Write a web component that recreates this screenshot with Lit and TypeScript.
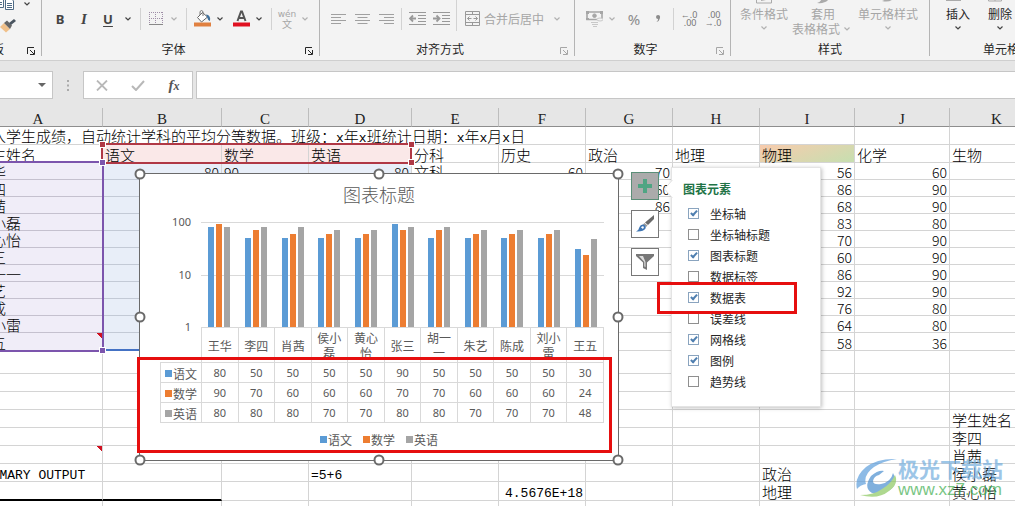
import { LitElement, html, css, nothing } from "lit";
import { customElement, property } from "lit/decorators.js";
import { classMap } from "lit/directives/class-map.js";

const NAMES = ["王华", "李四", "肖茜", "侯小磊", "黄心怡", "张三", "胡一一", "朱艺", "陈成", "刘小雷", "王五"];

const SERIES = [
  { name: "语文", key: "s1", values: [80, 50, 50, 50, 50, 90, 50, 50, 50, 50, 30] },
  { name: "数学", key: "s2", values: [90, 70, 60, 60, 60, 70, 70, 60, 60, 60, 24] },
  { name: "英语", key: "s3", values: [80, 80, 80, 70, 70, 80, 80, 70, 70, 70, 48] },
];

const OPTIONS: [string, boolean][] = [
  ["坐标轴", true],
  ["坐标轴标题", false],
  ["图表标题", true],
  ["数据标签", false],
  ["数据表", true],
  ["误差线", false],
  ["网格线", true],
  ["图例", true],
  ["趋势线", false],
];

const COLUMNS = ["A", "B", "C", "D", "E", "F", "G", "H", "I", "J", "K"];
const PHYSICS = [56, 86, 68, 83, 70, 60, 86, 92, 76, 64, 58];
const CHEMISTRY = [60, 90, 90, 80, 90, 90, 90, 90, 80, 80, 36];

type Cell = string | number;
type Row = { cls: string; cells: Record<string, Cell> };

const ROWS: Row[] = [
  { cls: "r18", cells: { B: "语文", C: "数学", D: "英语", A: "学生姓名", E: "分科", F: "历史", G: "政治", H: "地理", I: "物理", J: "化学", K: "生物" } },
  ...NAMES.map((name, i) => {
    const cells: Record<string, Cell> = { A: name, I: PHYSICS[i], J: CHEMISTRY[i] };
    if (i === 0) Object.assign(cells, { B: 80, C: "90", D: 80, E: "文科", F: 60, G: 70 });
    if (i === 1) cells.G = 60;
    if (i === 2) cells.G = 86;
    return { cls: i === 10 ? "r18 data last" : "r17 data", cells };
  }),
  { cls: "r23", cells: {} },
  { cls: "r18", cells: {} },
  { cls: "r18", cells: {} },
  { cls: "r18", cells: { K: "学生姓名" } },
  { cls: "r18", cells: { K: "李四" } },
  { cls: "r18 noted", cells: { K: "肖茜" } },
  { cls: "r18", cells: { A: "SUMMARY OUTPUT", D: "=5+6", I: "政治", K: "侯小磊" } },
  { cls: "r19 ruled", cells: { F: 4.5676e18, I: "地理", K: "黄心怡" } },
  { cls: "r18", cells: {} },
];

const caret = html`<svg class="caret" width="14" height="8" viewBox="0 0 14 8"><path d="M4.5 2.5 7 5l2.5-2.5" fill="none" stroke="currentColor" stroke-width="1.2"/></svg>`;
const launcher = html`<svg width="8" height="8" viewBox="0 0 8 8" fill="none" stroke="currentColor"><path d="M.5 7V.5H7M3 3l4 4M7.5 3v4.5H3"/></svg>`;

@customElement("ribbon-bar")
class RibbonBar extends LitElement {
  static styles = css`
    :host { display: flex; height: 60px; flex: none; overflow: hidden; background: #f3f3f3; border-bottom: 1px solid #cfcfcf; font: 12px/15px "Noto Sans CJK SC", sans-serif; color: #262626; }
    .group { display: flex; flex-direction: column; box-sizing: border-box; height: 56px; border-right: 1px solid #b4b4b4; flex: none; }
    .clip { width: 97px; margin-left: -55px; }
    .font { width: 278px; }
    .align { width: 255px; }
    .number { width: 156px; }
    .styles { width: 199px; }
    .cells { flex: 1 0 142px; border: 0; }
    .body { display: flex; height: 41px; align-items: flex-start; }
    .foot { display: flex; height: 15px; align-items: center; }
    .name { flex: 1; text-align: center; }
    .launch { width: 14px; height: 15px; padding: 5px 0 0; display: block; }
    button { font: inherit; color: inherit; border: 0; background: none; padding: 0; margin: 0; display: flex; align-items: center; justify-content: center; }
    svg { display: block; flex: none; }
    .caret { opacity: 0.85; }
    .tool { width: 24px; height: 37px; }
    .icon { width: 20px; height: 37px; }
    .drop { width: 14px; height: 37px; margin-left: 1px; }
    .sep { width: 1px; height: 22px; margin: 8px 5px 0; background: #d2d2d2; }
    .align .sep, .number .sep { margin: 8px 3px 0; }
    .align .tall { height: 31px; margin-top: 0; }
    .dim { color: #a6a6a6; }
    .font .body { padding-left: 6px; }
    .align .body { padding-left: 6px; }
    .number .body { padding-left: 9px; }
    .styles .body { padding-left: 9px; gap: 4px; }
    .cells .body { padding-left: 16px; gap: 18px; }
    .letter { font: bold 13px/18px "Noto Sans", sans-serif; color: #444; }
    .italic { font: italic bold 15px/18px "Liberation Serif", serif; color: #444; }
    .under { text-decoration: underline; text-underline-offset: 2px; }
    .second { margin-left: 4px; }
    .merge { height: 37px; padding: 0 5px; gap: 4px; }
    .merge .caret { margin-left: 2px; }
    .percent { font: 15px/18px "Noto Sans", sans-serif; margin-left: 3px; color: #8c8c8c; }
    .big { flex-direction: column; justify-content: flex-start; }
    .big .pic { height: 6px; }
    .big .caret { margin: 3px 0; }
    .line { display: flex; align-items: center; }
    .line .caret { margin: 0; }
    .phon { flex-direction: column; font-size: 10px; line-height: 9px; }
    .pin { font: 9px/9px "DejaVu Sans", sans-serif; }
    .deci { font: 9px/8px "Noto Sans", sans-serif; color: #777; }
    .brush { display: flex; flex-direction: column; padding-left: 55px; gap: 8px; }
    .copy { display: flex; height: 11px; gap: 4px; align-items: flex-start; }
  `;

  lines(d: string) {
    return html`<svg width="16" height="12" viewBox="0 0 16 12"><path d=${d} stroke="#a0a0a0" fill="none"/></svg>`;
  }

  render() {
    return html`
      <section class="group clip">
        <div class="body"><div class="brush">
          <button class="copy" aria-label="复制">
            <svg width="16" height="11" viewBox="0 0 16 11" fill="#fff" stroke="#4f6b85"><path d="M-3.500-3H3.500V7.500H-3.500zM5.500-2H11L13.500 1V9.500H5.500z"/><path d="M7 3.500h5M7 5.500h5M7 7.500h5M0 2.500h2M0 4.500h2"/></svg>
            ${caret}
          </button>
          <button aria-label="格式刷">
            <svg width="34" height="15" viewBox="0 0 34 15"><path d="M0 8 4 4l6 6-4 3.500z" fill="#f0c08a"/><path d="M4 4 7 1.500 12 6.500 10 10z" fill="#666"/><path d="m9 4 5-4 2 2-5 4z" fill="#4a5560"/></svg>
          </button>
        </div></div>
        <div class="foot"><span class="name">剪贴板</span><button class="launch" aria-label="剪贴板设置">${launcher}</button></div>
      </section>
      <section class="group font">
        <div class="body">
          <button class="tool letter">B</button><button class="tool italic">I</button><button class="tool letter under">U</button>
          <button class="drop" aria-label="下划线选项">${caret}</button>
          <i class="sep"></i>
          <button class="icon" aria-label="边框"><svg width="14" height="14" viewBox="0 0 14 14" stroke="#a08fa8" fill="none"><path stroke-dasharray="1 1" d="M0 .5h14M.5 0v13M13.500 0v13M6.500 0v13M0 6.500h14"/><path stroke="#888" d="M0 12.500h14"/></svg></button>
          <button class="drop dim" aria-label="边框选项">${caret}</button>
          <i class="sep"></i>
          <button class="icon" aria-label="填充颜色"><svg width="17" height="17" viewBox="0 0 17 17"><path d="M3.500 7.500 8.500 2.500l5 4.500-6 5z" fill="#fff" stroke="#666"/><path d="M6 5V1.500Q7.500-.5 9 1.500V6" fill="none" stroke="#777"/><path d="M12 4.500q5 .5 4 6.500-2.500-1-3-4z" fill="#41719c"/><path d="M0 12.500h17v4H0z" fill="#e08040"/></svg></button>
          <button class="drop" aria-label="填充颜色选项">${caret}</button>
          <button class="icon second" aria-label="字体颜色"><svg width="17" height="17" viewBox="0 0 17 17"><path d="M4.500 11 8 1.500h1L12.500 11M6 8h5" fill="none" stroke="#555" stroke-width="2"/><path d="M0 12.500h17v4H0z" fill="#e01020"/></svg></button>
          <button class="drop" aria-label="字体颜色选项">${caret}</button>
          <i class="sep"></i>
          <button class="icon phon dim"><span class="pin">wén</span><span>文</span></button>
          <button class="drop dim" aria-label="拼音选项">${caret}</button>
        </div>
        <div class="foot"><span class="name">字体</span><button class="launch" aria-label="字体设置">${launcher}</button></div>
      </section>
      <section class="group align">
        <div class="body dim">
          <button class="tool" aria-label="左对齐">${this.lines("M1 1.500h15M1 4.500h10M1 7.500h15M1 10.500h10")}</button>
          <button class="tool" aria-label="居中">${this.lines("M1 1.500h15M3.500 4.500h10M1 7.500h15M3.500 10.500h10")}</button>
          <button class="tool" aria-label="右对齐">${this.lines("M1 1.500h15M6 4.500h10M1 7.500h15M6 10.500h10")}</button>
          <i class="sep"></i>
          <button class="tool" aria-label="减少缩进"><svg width="17" height="13" viewBox="0 0 17 13" fill="none" stroke="#999"><path d="M0 .5h17M9 3.500h8M9 6.500h8M9 9.500h8M0 12.500h17"/><path stroke-width="1.800" d="M7 6.500H1.500M4 3.500l-3 3 3 3"/></svg></button>
          <button class="tool" aria-label="增加缩进"><svg width="17" height="13" viewBox="0 0 17 13" fill="none" stroke="#999"><path d="M0 .5h17M9 3.500h8M9 6.500h8M9 9.500h8M0 12.500h17"/><path stroke-width="1.800" d="M0 6.500h6M3.500 3.500l3 3-3 3"/></svg></button>
          <i class="sep tall"></i>
          <button class="merge"><svg width="15" height="15" viewBox="0 0 15 15" fill="none" stroke="#999"><path d="M.5.500h14v14H.5zM.5 3.500h14M.5 11.500h14M7.500 0v3.500M7.500 11.500V15M2.500 7.500h4M4.500 5.500l-2 2 2 2M8.500 7.500h4M10.500 5.500l2 2-2 2"/></svg><span>合并后居中</span>${caret}</button>
        </div>
        <div class="foot"><span class="name">对齐方式</span><button class="launch dim" aria-label="对齐设置">${launcher}</button></div>
      </section>
      <section class="group number">
        <div class="body dim">
          <button class="icon" aria-label="会计格式"><svg width="17" height="16" viewBox="0 0 17 16" fill="none" stroke="#a6a6a6"><path stroke-width="1.600" d="M1 1h15v7.500H1z"/><path d="M0 0h3v3H0zM14 0h3v3h-3zM0 7h3v2H0z" fill="#a6a6a6" stroke="none"/><circle cx="8.500" cy="4.700" r="1.800" fill="#a6a6a6"/><ellipse cx="14" cy="8.500" rx="3" ry="1.500" fill="#f3f3f3" stroke="#c8c8c8"/><path stroke="#c8c8c8" d="M5 11.500h7M6 13.500h6M7 15.500h4"/></svg></button>
          <button class="drop" aria-label="会计格式选项">${caret}</button>
          <button class="tool percent">%</button>
          <button class="tool" aria-label="千位分隔"><svg width="6" height="9" viewBox="0 0 6 9"><path d="M3 1q2.500 0 2 3-.5 3-3.500 4Q3.500 6 3 5 1 5 1 3 1 1 3 1z" fill="#8c8c8c"/></svg></button>
          <i class="sep"></i>
          <button class="tool deci"><span>←.0<br>&nbsp;.00</span></button>
          <button class="tool deci"><span>&nbsp;.00<br>→.0</span></button>
        </div>
        <div class="foot"><span class="name">数字</span><button class="launch dim" aria-label="数字设置">${launcher}</button></div>
      </section>
      <section class="group styles">
        <div class="body dim">
          <button class="big"><svg class="pic" width="16" height="6" viewBox="0 0 16 6"><path d="M.5-3v6h15v-6M5 .5l5-1" fill="none" stroke="#aaa"/></svg><span>条件格式</span>${caret}</button>
          <button class="big"><svg class="pic" width="16" height="6" viewBox="0 0 16 6"><path d="M2 3q4-1 5-5l7 1q-4 5-12 4z" fill="#aaa"/></svg><span>套用</span><span class="line">表格格式${caret}</span></button>
          <button class="big"><svg class="pic" width="16" height="6" viewBox="0 0 16 6"><path d="M2 1q4-1 5-4l7 1q-4 5-12 3z" fill="#aaa"/></svg><span>单元格样式</span>${caret}</button>
        </div>
        <div class="foot"><span class="name">样式</span></div>
      </section>
      <section class="group cells">
        <div class="body">
          <button class="big"><svg class="pic" width="24" height="6" viewBox="0 0 24 6"><path d="M0 0h15" stroke="#aaa" stroke-width="2"/></svg><span>插入</span>${caret}</button>
          <button class="big"><svg class="pic" width="24" height="6" viewBox="0 0 24 6"><path d="M.5-2v3h13v-3M7 0v1" fill="none" stroke="#aaa"/></svg><span>删除</span>${caret}</button>
        </div>
        <div class="foot"><span class="name">单元格</span></div>
      </section>
    `;
  }
}

@customElement("formula-bar")
class FormulaBar extends LitElement {
  static styles = css`
    :host { display: flex; flex: none; height: 28px; padding: 10px 0 9px; background: #e6e6e6; }
    .name { display: flex; width: 53px; box-sizing: border-box; background: #fff; border: 1px solid #c6c6c6; border-left: 0; }
    .cellname { flex: 1; min-width: 0; border: 0; padding: 0; outline: 0; background: none; }
    button { border: 0; padding: 0; background: none; display: flex; align-items: center; justify-content: center; }
    .arrow { width: 20px; }
    .dots { width: 30px; display: flex; align-items: center; justify-content: center; }
    .acts { display: flex; box-sizing: border-box; width: 110px; background: #fff; border: 1px solid #c6c6c6; }
    .acts button { flex: 1; }
    .fx { font: italic bold 15px/20px "Liberation Serif", serif; color: #555; }
    .small { font-size: 12px; }
    .entry { flex: 1; min-width: 0; margin-left: 3px; box-sizing: border-box; background: #fff; border: 1px solid #c6c6c6; border-right: 0; outline: 0; border-radius: 0; padding: 0 4px; }
  `;
  render() {
    return html`
      <div class="name"><input class="cellname" aria-label="名称框"><button class="arrow" aria-label="名称列表"><svg width="8" height="4"><path d="M0 0h8L4 4z" fill="#666"/></svg></button></div>
      <div class="dots"><svg width="2" height="11"><path d="M0 0h2v2H0zM0 4.500h2v2H0zM0 9h2v2H0z" fill="#aaa"/></svg></div>
      <div class="acts">
        <button aria-label="取消"><svg width="12" height="11" viewBox="0 0 12 11"><path d="m1 .5 10 10M11 .5l-10 10" stroke="#b8b8b8" stroke-width="1.800"/></svg></button>
        <button aria-label="输入"><svg width="14" height="11" viewBox="0 0 14 11"><path d="m1 6 4 4 8-9" fill="none" stroke="#b8b8b8" stroke-width="2"/></svg></button>
        <button class="fx"><span>f<span class="small">x</span></span></button>
      </div>
      <input class="entry" aria-label="编辑栏">
    `;
  }
}

@customElement("score-chart")
class ScoreChart extends LitElement {
  static styles = css`
    :host { display: block; box-sizing: border-box; background: #fff; border: 1px solid #6a6a6a; font: 12px/15px "Noto Sans CJK SC", sans-serif; color: #595959; }
    .title { margin: 0; padding-top: 7px; font-size: 18px; line-height: 26px; font-weight: 300; text-align: center; }
    .plot { display: flex; margin: 15px 14px 0 20px; height: 105px; }
    .axis { width: 31px; margin: -8px 10px -8px 0; display: flex; flex-direction: column; justify-content: space-between; text-align: right; font: 11px/16px "Noto Sans", sans-serif; }
    .bars { flex: 1; display: flex; position: relative; }
    .line { position: absolute; left: 0; right: 0; top: 0; height: 1px; background: #d9d9d9; }
    .mid { top: 50%; }
    .set { flex: 1; display: flex; align-items: flex-end; justify-content: center; gap: 2px; position: relative; }
    .bar { width: 6px; }
    .s1 { background: #5b9bd5; }
    .s2 { background: #ed7d31; }
    .s3 { background: #a5a5a5; }
    table { border-collapse: separate; border-spacing: 0; table-layout: fixed; width: 444px; margin-left: 20px; }
    .lead { width: 42px; }
    th, td { padding: 0; font-weight: 400; text-align: center; box-sizing: border-box; border: 0 solid #d9d9d9; border-width: 0 1px 1px 0; }
    thead th { height: 36px; border-top-width: 1px; }
    thead .blank { border-top-width: 0; }
    .wrap { height: 34px; display: flex; align-items: center; justify-content: center; overflow: hidden; }
    .who { width: 24px; }
    tbody th { border-left-width: 1px; }
    tbody th, td { height: 20px; line-height: 15px; }
    td { font: 11px/15px "Noto Sans", sans-serif; }
    .key { display: inline-flex; align-items: center; gap: 1px; }
    .swatch { width: 7px; height: 7px; }
    .legend { display: flex; justify-content: center; gap: 11px; padding-top: 9px; }
    .handle { position: absolute; box-sizing: border-box; width: 11px; height: 11px; border: 2px solid #6a6a6a; border-radius: 50%; background: #fff; translate: -50% -50%; }
    .l { left: 0; } .c { left: 50%; } .r { left: 100%; }
    .t { top: 0; } .m { top: 50%; } .b { top: 100%; }
  `;
  key(s: (typeof SERIES)[number]) {
    return html`<span class="key"><i class="swatch ${s.key}"></i>${s.name}</span>`;
  }
  render() {
    return html`
      <h2 class="title">图表标题</h2>
      <div class="plot">
        <div class="axis"><span>100</span><span>10</span><span>1</span></div>
        <div class="bars">
          <i class="line"></i><i class="line mid"></i>
          ${NAMES.map((_, i) => html`<div class="set">${SERIES.map((s) => html`<i class="bar ${s.key}" style="height:${Math.log10(s.values[i]) * 50}%"></i>`)}</div>`)}
        </div>
      </div>
      <table>
        <thead><tr><th class="lead blank"></th>${NAMES.map((n) => html`<th scope="col"><div class="wrap"><span class="who">${n}</span></div></th>`)}</tr></thead>
        <tbody>${SERIES.map((s) => html`<tr><th scope="row">${this.key(s)}</th>${s.values.map((v) => html`<td>${v}</td>`)}</tr>`)}</tbody>
      </table>
      <div class="legend">${SERIES.map((s) => this.key(s))}</div>
      ${["l t", "c t", "r t", "l m", "r m", "l b", "c b", "r b"].map((p) => html`<i class="handle ${p}"></i>`)}
    `;
  }
}

@customElement("element-menu")
class ElementMenu extends LitElement {
  static styles = css`
    :host { display: block; box-sizing: border-box; background: #fff; border: 1px solid #e4e4e4; box-shadow: 1px 1px 4px rgba(0, 0, 0, 0.25); padding: 11px 11px 15px; font: 12px/21px "Noto Sans CJK SC", sans-serif; color: #262626; }
    .notch { position: absolute; left: -8px; top: 12px; }
    h3 { margin: 0 0 4px; font-size: 12px; line-height: 20px; font-weight: 700; color: #217346; }
    label { display: flex; align-items: center; height: 21px; padding-left: 5px; gap: 11px; }
    input { appearance: none; box-sizing: border-box; margin: 0; width: 11px; height: 11px; border: 1px solid #8f8f8f; background: #fff; display: flex; justify-content: center; }
    input:checked { border-color: #8aa4bf; }
    input:checked::after { content: ""; box-sizing: border-box; width: 4px; height: 7px; border: solid #4f7fb0; border-width: 0 2px 2px 0; rotate: 42deg; }
  `;
  render() {
    return html`
      <svg class="notch" width="9" height="18" viewBox="0 0 9 18"><path d="M8.500 0 .5 9l8 9" fill="#fff" stroke="#e4e4e4"/></svg>
      <h3>图表元素</h3>
      ${OPTIONS.map(([t, on]) => html`<label><input type="checkbox" .checked=${on}>${t}</label>`)}
    `;
  }
}

@customElement("score-sheet")
class ScoreSheet extends LitElement {
  @property({ type: Array }) rows: Row[] = ROWS;

  static styles = css`
    :host { display: block; flex: 1; position: relative; overflow: hidden; min-height: 0; background: #fff; }
    table { border-collapse: separate; border-spacing: 0; table-layout: fixed; width: max(1070px, calc(100% + 26px)); margin-left: -26px; font: 15px/12px "Noto Sans CJK SC", sans-serif; font-weight: 300; color: #000; }
    .A { width: 129px; } .B { width: 119px; } .C { width: 87px; } .D { width: 103px; }
    .E, .F, .G, .H { width: 87px; }
    .I, .J { width: 95px; }
    th { box-sizing: border-box; height: 19px; padding: 3px 0 0; background: #e6e6e6; border-right: 1px solid #bdbdbd; border-bottom: 1px solid #8e8e8e; font: 15px/14px "Liberation Serif", serif; color: #222; }
    td { box-sizing: border-box; padding: 1px 2px 0; border-right: 1px solid #d4d4d4; border-bottom: 1px solid #d4d4d4; white-space: nowrap; vertical-align: middle; }
    .r17 { height: 17px; } .r18 { height: 18px; } .r19 { height: 19px; } .r23 { height: 23px; }
    .r18 td, .r19 td { padding-top: 2px; }
    .mono { font: 13px/10px "Liberation Mono", monospace; }
    .digits { font-size: 14px; line-height: 10px; }
    .right { text-align: right; }
    .head.B, .head.C, .head.D { background: #fae8e8; }
    .head.I { background: linear-gradient(160deg, #f8cbad, #c6dfb0); }
    .data .A { background: #f0edf8; border-bottom-color: #c5c1cf; }
    .data .B, .data .C, .data .D { background: #e8eef8; border-bottom-color: #c3cad6; }
    .ruled .A, .ruled .B { border-bottom: 2px solid #000; }
    .last .A, .noted .A { background-image: linear-gradient(225deg, #d01020 4px, transparent 4px); }
    .range, .grip, .chart, .tools, .menu, .mark, .brand { position: absolute; }
    .red { left: 101px; top: 35px; width: 307px; height: 17px; border: 2px solid #b03845; }
    .purple { left: -4px; top: 53px; width: 104px; height: 187px; border: 2px solid #7c55ad; }
    .blue { left: 103px; top: 241px; width: 300px; height: 2px; background: #4472c4; }
    .grip { width: 5px; height: 5px; outline: 1px solid #fff; background: #b03845; }
    .g1 { left: 100px; top: 34px; } .g2 { left: 409px; top: 34px; } .g3 { left: 409px; top: 52px; }
    .g4 { left: 100px; top: 52px; background: #7c55ad; } .g5 { left: 100px; top: 240px; background: #7c55ad; }
    .chart { left: 139px; top: 65px; width: 480px; height: 288px; }
    .tools { left: 631px; top: 64px; display: flex; flex-direction: column; gap: 10px; }
    .tool { width: 28px; height: 28px; padding: 0; border: 1px solid #777; background: #fff; display: flex; align-items: center; justify-content: center; }
    .on { background: #ababab; border-color: #5b8f78; }
    .menu { left: 671px; top: 59px; width: 150px; height: 240px; }
    .mark { border: 3px solid #e60f0f; box-sizing: border-box; }
    .m1 { left: 137px; top: 249px; width: 475px; height: 96px; }
    .m2 { left: 657px; top: 174px; width: 140px; height: 32px; }
    .brand { left: 856px; top: 348px; display: flex; align-items: center; gap: 1px; opacity: 0.7; font-family: "Noto Sans CJK SC", sans-serif; }
    .cn { font-size: 21px; line-height: 25px; font-weight: 700; color: #74aede; }
    .url { font: 17px/18px "Liberation Sans", sans-serif; color: #3fae50; }
    .words { display: flex; flex-direction: column; }
  `;

  text(v: Cell) {
    const s = typeof v === "number" && v > 1e6 ? "4.5676E+18" : String(v);
    if (/^\d+$/.test(s)) return html`<span class="digits">${s}</span>`;
    return /^[\x20-\x7e]+$/.test(s) ? html`<span class="mono">${s}</span>` : s;
  }

  render() {
    const x = html`<span class="mono">x</span>`;
    return html`
      <table>
        <thead><tr>${COLUMNS.map((c) => html`<th scope="col" class=${c}>${c}</th>`)}</tr></thead>
        <tbody>
          <tr class="r18"><td colspan="6">输入学生成绩，自动统计学科的平均分等数据。班级：${x}年${x}班统计日期：${x}年${x}月${x}日</td><td></td><td></td><td></td><td></td><td></td></tr>
          ${this.rows.map((r, i) => html`<tr class=${r.cls}>${COLUMNS.map((c) => {
            const v = r.cells[c];
            return html`<td class=${classMap({ [c]: true, head: i === 0, right: typeof v === "number" })}>${v === undefined ? nothing : this.text(v)}</td>`;
          })}</tr>`)}
        </tbody>
      </table>
      <i class="range red"></i><i class="range purple"></i><i class="range blue"></i>
      ${["g1", "g2", "g3", "g4", "g5"].map((g) => html`<i class="grip ${g}"></i>`)}
      <score-chart class="chart"></score-chart>
      <div class="tools">
        <button class="tool on" aria-label="图表元素"><svg width="14" height="14"><path d="M5 0h4v5h5v4H9v5H5V9H0V5h5z" fill="#4fa583"/></svg></button>
        <button class="tool" aria-label="图表样式"><svg width="20" height="20" viewBox="0 0 20 20"><path d="M19 1v4l-6 6-3-2.500z" fill="#6a6a6a"/><path d="m9.500 9 3 2.500-1.500 1.500-3-2.500z" fill="#999"/><path d="M1 17.500Q4 16 4.500 13q1-3 4-2.500 3 1.500 2 4Q8.500 18 1 17.500z" fill="#3f76b4"/><path d="M6 13.500q1.500-2 3-.5l-1 2z" fill="#fff"/></svg></button>
        <button class="tool" aria-label="图表筛选器"><svg width="18" height="18" viewBox="0 0 18 18"><path d="M0 1h18v2l-7 6.500V17l-4-2V9.500L0 3z" fill="#777"/><path d="M3 3h4l2.500 6v5L8.300 13.500V9z" fill="#ddd"/></svg></button>
      </div>
      <element-menu class="menu"></element-menu>
      <i class="mark m1"></i><i class="mark m2"></i>
      <div class="brand">
        <svg width="41" height="42" viewBox="0 0 41 42">
          <path d="M41 2Q22 1 10 10-2 20 1 32q3-4 9-5Q7 18 18 10 27 4 41 2z" fill="#5e9fdc"/>
          <path d="M15 19q7-6 13-5l-5 4q-5 1-6 6 0 4 8 3 10-2 12-11 6 10-3 17-9 5-18 3-9-5-1-17z" fill="#4b8fd0"/>
          <path d="M4 38q14 0 22-6 9-5 13-14 4 9-6 16Q22 43 4 38z" fill="#8cc860"/>
        </svg>
        <div class="words"><span class="cn">极光下载站</span><span class="url">www.xz7.com</span></div>
      </div>
    `;
  }
}

@customElement("app-root")
class AppRoot extends LitElement {
  static styles = css`
    :host { display: flex; flex-direction: column; height: 100vh; overflow: hidden; background: #fff; }
  `;
  render() {
    return html`<ribbon-bar></ribbon-bar><formula-bar></formula-bar><score-sheet></score-sheet>`;
  }
}
